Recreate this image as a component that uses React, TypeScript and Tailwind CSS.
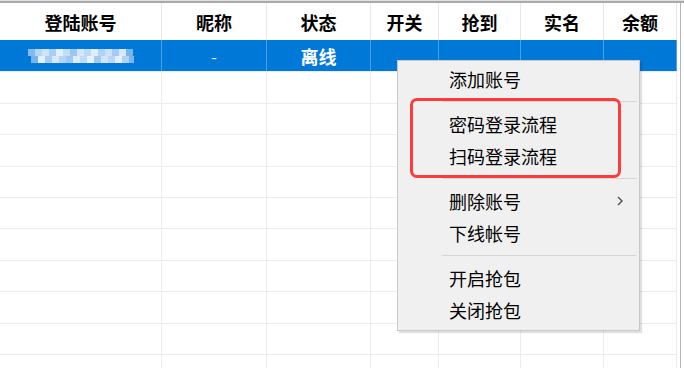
import React from 'react'

const cols = ['登陆账号', '昵称', '状态', '开关', '抢到', '实名', '余额']
const grid = 'grid grid-cols-[162px_105px_104px_68px_82px_83px_73px]'
const rowHeights = ['h-[32px]', 'h-[31px]', 'h-[32px]', 'h-[31px]', 'h-[31px]', 'h-[32px]', 'h-[31px]', 'h-[32px]', 'h-[31px]', 'h-[32px]']

// pixelated (blurred) account number
const mosaic = [
  '#d9eafb', '#b7d6f4', '#cfe4f9', '#a9cef2', '#e3f0fc', '#c2ddf6', '#9dc7ef', '#d4e7fa', '#bcd9f5', '#e0eefb', '#afd1f3', '#cde2f8', '#a4cbf1', '#d8e9fa', '#c6dff7',
  '#c4def7', '#e4f0fc', '#a7cdf2', '#d6e8fa', '#b3d4f4', '#9fc8f0', '#dcecfb', '#c0dbf6', '#e8f3fd', '#a1caf1', '#d1e5f9', '#bad8f5', '#e2effc', '#b0d2f3', '#cbe1f8',
]

function Mosaic() {
  return (
    <svg width="106" height="15" viewBox="0 0 106 15">
      {mosaic.map((c, i) => {
        const r = Math.floor(i / 15)
        const col = i % 15
        return <rect key={i} x={col * 7 + (r ? 3 : 0)} y={r * 7 + 1} width="7" height="7" fill={c} opacity={col === 0 || col === 14 ? 0.6 : 1} />
      })}
    </svg>
  )
}

type Item = { label: string; sub?: boolean } | 'sep'

const items: Item[] = [
  { label: '添加账号' },
  'sep',
  { label: '密码登录流程' },
  { label: '扫码登录流程' },
  'sep',
  { label: '删除账号', sub: true },
  { label: '下线帐号' },
  'sep',
  { label: '开启抢包' },
  { label: '关闭抢包' },
]

function ContextMenu() {
  return (
    <div className="absolute left-[397px] top-[60px] w-[243px] h-[271px] bg-[#f0f0f0] border border-[#c8c8c8] shadow-[2px_2px_1px_rgba(0,0,0,0.12)] py-[3px]">
      {items.map((it, i) =>
        it === 'sep' ? (
          <div key={i} className="h-[13px] pt-[5px]">
            <div className="ml-[44px] mr-[3px] h-px bg-[#d5d5d5]" />
          </div>
        ) : (
          <div key={i} className="h-[32px] flex items-center justify-between pl-[51px] pr-[16px] pb-[2px] text-[18px] leading-none text-black">
            <span>{it.label}</span>
            {it.sub && (
              <svg width="6" height="10" viewBox="0 0 6 10">
                <path d="M1 1 L5 5 L1 9" fill="none" stroke="#555" strokeWidth="1.5" />
              </svg>
            )}
          </div>
        )
      )}
    </div>
  )
}

export default function App() {
  return (
    <div
      className="relative w-[684px] h-[368px] overflow-hidden bg-white"
      style={{ fontFamily: '"Noto Sans CJK SC", "Microsoft YaHei", sans-serif' }}
    >
      <div className="h-px bg-[#e0e0e0]" />
      <div className="h-[2px] bg-[#a9a9a9]" />
      <div className="flex">
        <div className="w-[677px]">
          {/* header */}
          <div className={`${grid} h-[37px]`}>
            {cols.map(c => (
              <div key={c} className="flex items-center justify-center border-r border-[#e6e6e6] text-[18px] font-bold text-black leading-none">
                {c}
              </div>
            ))}
          </div>
          {/* selected row */}
          <div className={`${grid} h-[32px] border-b border-[#ececec]`}>
            {cols.map((c, i) => (
              <div key={c} className="flex items-center justify-center bg-[#0078d7] border-r border-[#4f9de3] text-white text-[18px] font-bold leading-none">
                {i === 0 && <Mosaic />}
                {i === 1 && <span className="font-normal text-[16px]">-</span>}
                {i === 2 && '离线'}
              </div>
            ))}
          </div>
          {/* empty rows */}
          {rowHeights.map((h, r) => (
            <div key={r} className={`${grid} ${h} border-b border-[#ececec]`}>
              {cols.map(c => (
                <div key={c} className="border-r border-[#ececec]" />
              ))}
            </div>
          ))}
        </div>
        <div className="w-[3px]" />
        <div className="w-px h-[368px] bg-[#b4b4b4]" />
      </div>

      <ContextMenu />
      <div className="absolute left-[410px] top-[98px] w-[211px] h-[80px] border-[3px] border-[#ff3b3b] rounded-[7px]" />
    </div>
  )
}
